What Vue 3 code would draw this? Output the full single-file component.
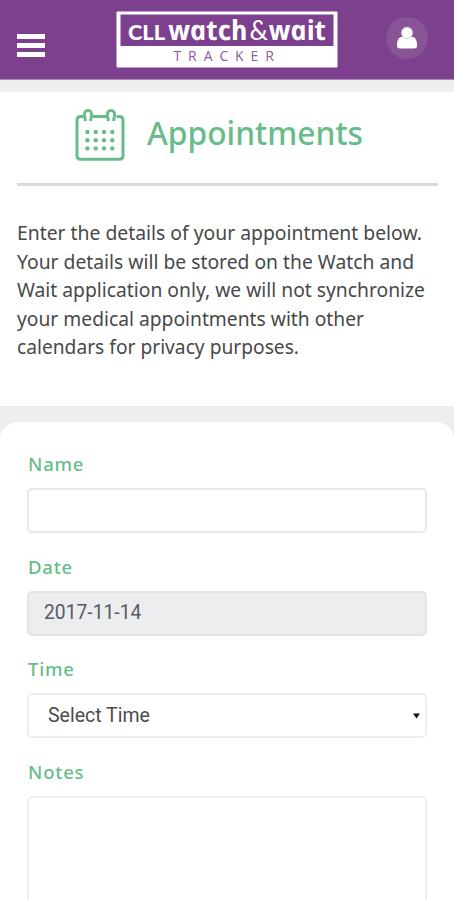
<script setup>
const intro = [
  { text: 'Enter the details of your appointment below.', width: 405 },
  { text: 'Your details will be stored on the Watch and', width: 397 },
  { text: 'Wait application only, we will not synchronize', width: 408 },
  { text: 'your medical appointments with other', width: 347 },
  { text: 'calendars for privacy purposes.', width: 282 },
]
const dots = [0, 1, 2].flatMap((r) => [0, 1, 2, 3].map((c) => ({ x: 12.4 + c * 8.3, y: 24 + r * 8.2 })))
</script>

<template>
  <div class="screen">
    <header class="topbar">
      <button class="menu" aria-label="Menu"><i></i><i></i><i></i></button>
      <svg class="logo" width="222" height="57" viewBox="0 0 222 57">
        <rect x="0.5" y="0.5" width="221" height="56" rx="1" fill="#fff" />
        <rect x="4.500" y="3.500" width="213" height="31.500" fill="#7d408f" />
        <g fill="#fff">
          <text class="initials" x="12" y="28.500" font-size="20.500" textLength="37" lengthAdjust="spacingAndGlyphs">CLL</text>
          <text class="brand" transform="translate(54 28.500) skewX(12)" font-size="27.500" textLength="79" lengthAdjust="spacingAndGlyphs">watch</text>
          <text class="amp" x="133.500" y="28.500" font-size="27" textLength="18.500" lengthAdjust="spacingAndGlyphs">&amp;</text>
          <text class="brand" transform="translate(154.500 28.500) skewX(12)" font-size="27.500" textLength="57" lengthAdjust="spacingAndGlyphs">wait</text>
        </g>
        <text class="tracker" x="57.500" y="50" font-size="14" fill="#8d5a9e">TRACKER</text>
      </svg>
      <button class="profile" aria-label="Profile">
        <svg width="22" height="24" viewBox="0 0 22 24">
          <path d="M4.500 11h13q3.500 2 3.500 7.500v1.500q0 2.500-3 2.500h-14q-3 0-3-2.500v-1.500q0-5.500 3.500-7.500z" fill="#fff" />
          <circle cx="11" cy="6.800" r="5.800" fill="#fff" stroke="#b9a3c1" stroke-width=".5" />
        </svg>
      </button>
    </header>

    <main>
      <section class="intro">
        <div class="heading">
          <svg class="calendar" width="50" height="53" viewBox="0 0 50 53">
            <g fill="none" stroke="#68bc89" stroke-width="3">
              <path d="M8.500 8.500H5.500Q2 8.500 2 12V48Q2 51.200 5.500 51.200H44.500Q48 51.200 48 48V12Q48 8.500 44.500 8.500H41.500M17.500 8.500H32" />
              <path d="M10.500 13L9.500 7.500Q9 2.500 13 2.500T16.500 7.500L15.500 13M33.500 13L32.500 7.500Q32 2.500 36 2.500T39.500 7.500L38.500 13" />
            </g>
            <circle v-for="(d, i) in dots" :key="i" :cx="d.x" :cy="d.y" r="2.200" fill="#68bc89" />
          </svg>
          <svg class="title" width="224" height="54" role="heading">
            <text x="0" y="37" textLength="216" lengthAdjust="spacingAndGlyphs">Appointments</text>
          </svg>
        </div>
        <div class="rule"></div>
        <div class="copy">
          <svg v-for="line in intro" :key="line.text" width="420" height="28.500">
            <text x="0" y="20" :textLength="line.width" lengthAdjust="spacingAndGlyphs">{{ line.text }}</text>
          </svg>
        </div>
      </section>

      <form class="card">
        <div class="field">
          <label>Name</label>
          <input class="box" type="text" aria-label="Name" />
        </div>
        <div class="field">
          <label>Date</label>
          <div class="box date">2017-11-14</div>
        </div>
        <div class="field">
          <label>Time</label>
          <div class="box select"><span>Select Time</span>
            <svg width="7" height="6" viewBox="0 0 7 6"><path d="M0 .5H7L3.500 5.500Z" fill="#111" /></svg>
          </div>
        </div>
        <div class="field">
          <label>Notes</label>
          <div class="box notes"></div>
        </div>
      </form>
    </main>
  </div>
</template>

<style>
body { margin: 0; overflow: hidden; }
</style>

<style scoped>
* { box-sizing: border-box; }
.screen {
  width: 100%;
  height: 900px;
  overflow: hidden;
  background: #eee;
  font-family: "Noto Sans", "Open Sans", sans-serif;
}
.topbar {
  height: 80px;
  padding: 11px 26px 0 17px;
  display: flex;
  align-items: flex-start;
  background: #7d408f;
  border-bottom: 1px solid #a98bb4;
}
button { border: 0; padding: 0; background: none; }
.menu {
  width: 28px;
  margin-top: 23px;
  display: flex;
  flex-direction: column;
  gap: 3.500px;
}
.menu i { height: 5.300px; background: #fff; }
.logo { margin-left: 71px; }
.initials { font-family: Lato, sans-serif; font-weight: 900; }
.brand { font-family: "Open Sans", "Noto Sans", sans-serif; font-style: italic; font-weight: 700; }
.amp { font-family: Lato, sans-serif; font-weight: 400; }
.tracker { font-family: "Open Sans", sans-serif; letter-spacing: 6.900px; }
.profile {
  width: 42px;
  height: 42px;
  margin: 6px 0 0 auto;
  border-radius: 50%;
  background: #885495;
  display: flex;
  align-items: center;
  justify-content: center;
}
.intro {
  height: 314px;
  margin-top: 12px;
  padding: 0 16px;
  background: #fff;
}
.heading {
  height: 91px;
  padding: 16px 0 0 59px;
  display: flex;
  gap: 22px;
}
.title { fill: #68bc89; font-size: 33px; font-weight: 500; overflow: visible; }
.rule { height: 3px; margin-left: 1px; background: #d9d9d9; }
.copy {
  padding: 34px 0 0 1px;
  display: flex;
  flex-direction: column;
  font-size: 20px;
  fill: #484848;
}
.copy svg { display: block; overflow: visible; }
.card {
  height: 500px;
  margin-top: 16px;
  padding: 29px 27px 0;
  border-radius: 18px 18px 0 0;
  background: #fff;
}
.field { height: 102.700px; }
label {
  display: block;
  height: 37px;
  padding-left: 1px;
  font-size: 18.500px;
  line-height: 26px;
  letter-spacing: .8px;
  font-weight: 500;
  color: #68bc89;
}
.box {
  display: flex;
  align-items: center;
  width: 100%;
  height: 45px;
  border: 2px solid #e8e8e8;
  border-radius: 5px;
  background: #fff;
}
.date {
  padding: 0 0 1px 15px;
  background: #ebedee;
  border-color: #e1e3e4;
  font-family: Roboto, sans-serif;
  font-size: 19.300px;
  color: #575b64;
}
.select {
  justify-content: space-between;
  padding: 0 5px 0 19px;
  border-color: #eee;
  font-family: Roboto, sans-serif;
  font-size: 19.500px;
  color: #4c4c4c;
}
.notes { height: 140px; border-color: #eee; }
</style>
